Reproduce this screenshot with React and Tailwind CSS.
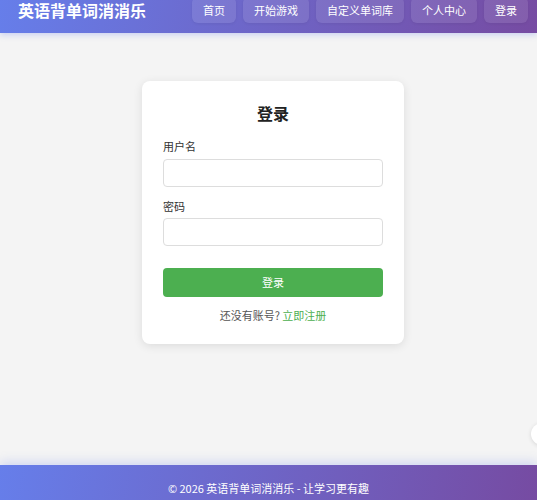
import React from "react";

const font = { fontFamily: '"Noto Sans CJK SC", "Noto Sans", sans-serif' };

export default function App() {
  const navs = ["首页", "开始游戏", "自定义单词库", "个人中心", "登录"];
  return (
    <div className="h-[500px] w-full flex flex-col overflow-hidden relative bg-[#f4f4f4]" style={font}>
      <header className="relative z-10 h-[33px] shrink-0 flex items-start justify-between pl-[18px] pr-[9px] bg-[linear-gradient(100deg,#667eea,#764ba2)] shadow-[0_2px_6px_rgba(102,126,234,0.3)]">
        <div className="text-white font-bold text-[16px] leading-[18px] pt-[1px]">英语背单词消消乐</div>
        <nav className="flex gap-[7px] -mt-[3px]">
          {navs.map((n) => (
            <div key={n} className="h-[26px] px-[11px] flex items-center justify-center rounded-[6px] bg-white/10 text-white text-[11px] shadow-[0_1px_3px_rgba(0,0,0,0.06)]">
              {n}
            </div>
          ))}
        </nav>
      </header>
      <main className="flex-1 flex justify-center pl-[9px] pt-[48px]">
        <div className="w-[262px] h-[263px] bg-white rounded-[8px] shadow-[0_2px_10px_rgba(0,0,0,0.1)] px-[21px] pt-[20px]">
          <h2 className="text-center text-[16px] leading-[24px] font-bold text-[#222]">登录</h2>
          <div className="mt-[15px] text-[11px] leading-[12px] text-[#333]">用户名</div>
          <div className="mt-[7px] h-[28px] border border-[#ddd] rounded-[4px]"></div>
          <div className="mt-[13px] text-[11px] leading-[12px] text-[#333]">密码</div>
          <div className="mt-[6px] h-[28px] border border-[#ddd] rounded-[4px]"></div>
          <button className="mt-[22px] w-full h-[29px] bg-[#4caf50] rounded-[4px] text-white text-[11px] flex items-center justify-center">登录</button>
          <div className="mt-[11px] text-center text-[11px] leading-[14px] text-[#555]">
            还没有账号? <span className="text-[#4caf50]">立即注册</span>
          </div>
        </div>
      </main>
      <footer className="relative z-10 h-[35px] shrink-0 flex items-end justify-center pb-[5px] bg-[linear-gradient(100deg,#667eea,#764ba2)] shadow-[0_-3px_10px_rgba(102,126,234,0.25)] text-white text-[11px] leading-[14px]">
        © 2026 英语背单词消消乐 - 让学习更有趣
      </footer>
      <div className="absolute left-[531px] top-[423px] w-[22px] h-[22px] rounded-full bg-white shadow-[0_1px_4px_rgba(0,0,0,0.12)]"></div>
    </div>
  );
}
